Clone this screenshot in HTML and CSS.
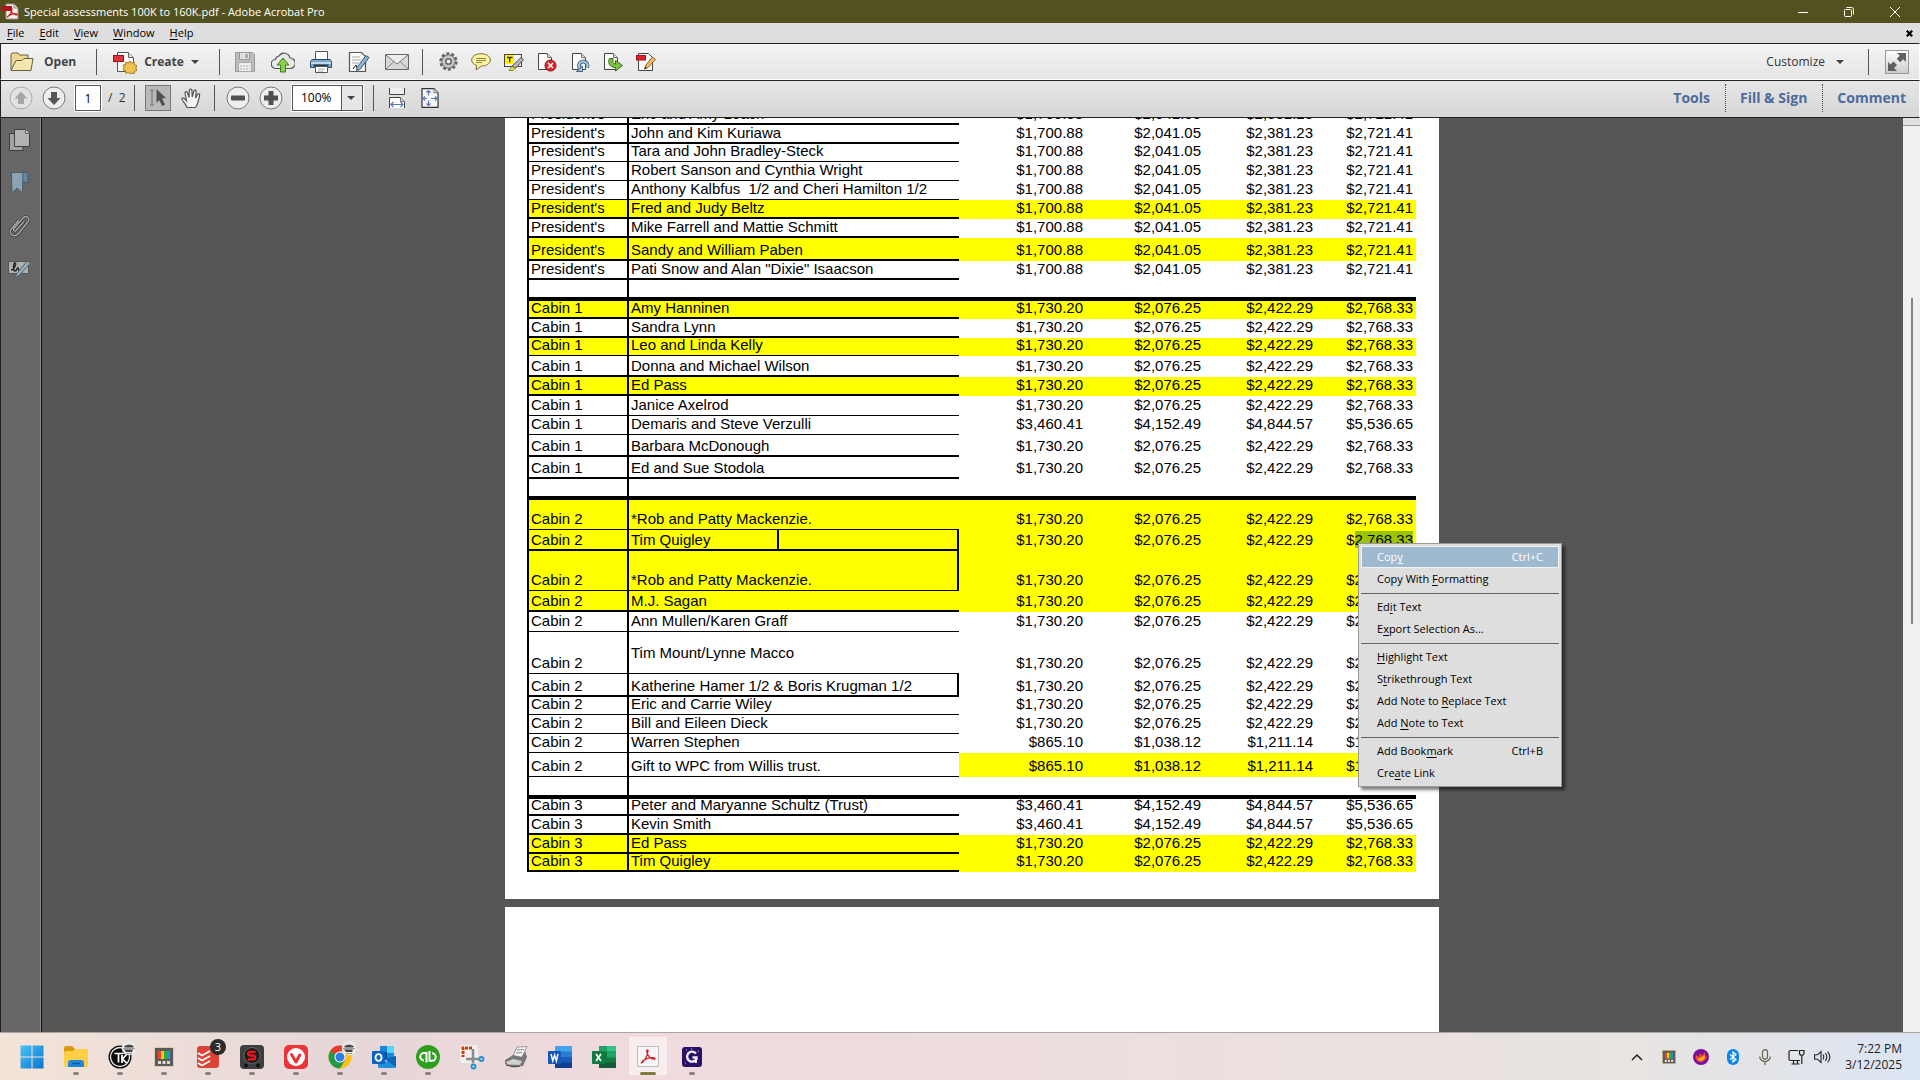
FILE: index.html
```html
<!DOCTYPE html>
<html lang="en">
<head>
    <meta charset="utf-8" />
    <title>Special assessments 100K to 160K.pdf - Adobe Acrobat Pro</title>
    <link rel="stylesheet" href="styles.css">
</head>

<body>
<header class="titlebar">
    <svg class="app_icon" width="17" height="17" viewBox="0 0 17 17"><path d="M4 1h8l4 4v11H4z" fill="#f4f0ec" stroke="#9a8f84"/><path d="M12 1v4h4" fill="#ccc" stroke="#9a8f84"/><path d="M0 3h10v5H0z" fill="#b3141c"/><path d="M5 14c2-1 5-5 5-8 0-1-1.500-1-1.200.500C9.300 9.500 12 12 14.500 12c1 0 1-1-.5-1.200C11 10.400 7 12 5.500 13.800z" fill="none" stroke="#c4121a" stroke-width="1.200"/></svg>
    <h1 class="tit">Special assessments 100K to 160K.pdf - Adobe Acrobat Pro</h1>
    <div class="win_btns">
        <button type="button" aria-label="Minimize"><svg width="10" height="10" viewBox="0 0 10 10"><path d="M0 5.500h10" stroke="#fff"/></svg></button>
        <button type="button" aria-label="Restore"><svg width="10" height="10" viewBox="0 0 10 10" fill="none" stroke="#fff"><rect x=".5" y="2.500" width="7" height="7" rx="1"/><path d="M2.500 .5h5a2 2 0 0 1 2 2v5"/></svg></button>
        <button type="button" aria-label="Close"><svg width="10" height="10" viewBox="0 0 10 10"><path d="M0 0l10 10M10 0L0 10" stroke="#fff"/></svg></button>
    </div>
</header>

<nav class="menubar">
    <a href="#"><u>F</u>ile</a>
    <a href="#"><u>E</u>dit</a>
    <a href="#"><u>V</u>iew</a>
    <a href="#"><u>W</u>indow</a>
    <a href="#"><u>H</u>elp</a>
    <button type="button" class="doc_close" aria-label="Close document"><svg width="7" height="7" viewBox="0 0 7 7"><path d="M.8 .8l5.400 5.400M6.200 .8L.8 6.200" stroke="#000" stroke-width="2.200"/></svg></button>
</nav>

<div class="toolbar">
    <button type="button" class="big open"><svg width="24" height="20" viewBox="0 0 24 20"><path d="M1 18V3l1-2h6l1.500 2H18v4" fill="#ecd793" stroke="#6b5f43"/><path d="M1 18.500L6 8.500h6l2-2h9l-2 12z" fill="#f5e6b0" stroke="#6b5f43"/></svg>Open</button>
    <span class="sep"></span>
    <button type="button" class="big create"><svg width="24" height="24" viewBox="0 0 24 24"><path d="M4.500 2.500h11l5 5v14h-16z" fill="#fbfbfb" stroke="#555"/><path d="M15.500 2.500v5h5" fill="#ddd" stroke="#666"/><rect x=".5" y="5.500" width="10" height="6" fill="#e0303a" stroke="#97141b"/><path d="M17 11l1.600 2 2.600-.8.3 2.600 2.500.8-1.200 2.400 1.200 2.400-2.500.8-.3 2.600-2.600-.8L17 24l-1.600-1.600-2.600.8-.3-2.600-2.500-.8 1.200-2.400L10 15l2.500-.2.300-2.600 2.600.8z" fill="#f0c24e" stroke="#a8791c"/></svg>Create<i class="caret"></i></button>
    <span class="sep"></span>
    <div class="group file_group">
        <button type="button" aria-label="Save"><svg width="20" height="20" viewBox="0 0 20 20"><path d="M.5 .5h17l2 2v17H.5z" fill="#bdbdbd" stroke="#999"/><rect x="4.500" y=".5" width="10" height="7" fill="#e0e0e0" stroke="#999"/><rect x="10" y="2" width="3" height="4" fill="#aaa"/><rect x="3.500" y="10.500" width="13" height="9" fill="#efefef" stroke="#aaa"/><path d="M5 14h10M5 17h10" stroke="#aaa" stroke-dasharray="2 1"/></svg></button>
        <button type="button" aria-label="Upload"><svg width="24" height="22" viewBox="0 0 24 22"><path d="M5 17.500a4.500 4.500 0 0 1-.5-9A4 4 0 0 1 8 5a6 6 0 0 1 11 2 5 5 0 0 1 0 10.500z" fill="#e9e9e9" stroke="#555" stroke-width="1.200"/><path d="M12 7l6 7h-3.500v7h-5v-7H6z" fill="#8ad14a" stroke="#3f7d17"/></svg></button>
        <button type="button" aria-label="Print"><svg width="22" height="24" viewBox="0 0 22 24"><path d="M5.500 1.500h12v10h-12z" fill="#fdfdfd" stroke="#555"/><path d="M2 9.500h18l1.500 2v6h-21v-6z" fill="#78a9cb" stroke="#2e4a60"/><path d="M1 13h20" stroke="#bcd8ea" stroke-width="2"/><path d="M3.500 15.500h15" stroke="#233645" stroke-width="2"/><path d="M5.500 16.500h12v6h-12z" fill="#fff" stroke="#555"/><path d="M8 19h7M8 21h5" stroke="#aaa"/></svg></button>
        <button type="button" aria-label="Sign"><svg width="22" height="22" viewBox="0 0 22 22"><path d="M1.500 1.500h12l4 4v15h-16z" fill="#fafafa" stroke="#555" stroke-width="1.200"/><path d="M4 6h8M4 9h9M4 12h7" stroke="#aaa"/><path d="M5 18l3-4 1 3 3-1" fill="none" stroke="#222"/><path d="M9 16.500L18 4.500l3 2-9 12-3.500 1z" fill="#8fb4d3" stroke="#3b5670"/></svg></button>
        <button type="button" aria-label="Email"><svg width="24" height="16" viewBox="0 0 24 16"><path d="M.5 .5h23v15H.5z" fill="#d8d8d8" stroke="#666"/><path d="M1 15l8.500-8M23 15l-8.500-8" stroke="#888"/><path d="M1 1l11 9L23 1" fill="#eee" stroke="#777"/></svg></button>
    </div>
    <span class="sep"></span>
    <div class="group edit_group">
        <button type="button" aria-label="Settings"><svg width="19" height="19" viewBox="0 0 19 19"><circle cx="9.500" cy="9.500" r="7.700" fill="none" stroke="#666" stroke-width="3" stroke-dasharray="3 1.840"/><circle cx="9.500" cy="9.500" r="6.700" fill="#bbb" stroke="#666"/><circle cx="9.500" cy="9.500" r="6" fill="#c4c4c4"/><circle cx="9.500" cy="9.500" r="2.700" fill="#eee" stroke="#555" stroke-width="1.300"/></svg></button>
        <button type="button" aria-label="Comment"><svg width="20" height="18" viewBox="0 0 20 18"><path d="M10 .7c5 0 9.300 2.500 9.300 6.300S15 13 10.500 13L5 17l.7-4.600C2.500 11.500.7 9.500.7 7 .7 3.200 5 .7 10 .7z" fill="#fbf3a0" stroke="#77713c"/><path d="M5 5.500h10M5 7.500h10M5 9.500h6" stroke="#8d8547"/></svg></button>
        <button type="button" aria-label="Highlight"><svg width="20" height="18" viewBox="0 0 20 18"><rect x=".5" y="1.500" width="17" height="12" fill="#f5f5f5" stroke="#444"/><rect x="1" y="2" width="9" height="9" fill="#fff100"/><path d="M3 4.500h5.500M5.700 4.500v5" stroke="#333" stroke-width="1.300"/><path d="M8 13l9-8.500 2.500 2L12 15z" fill="#b5b5b5" stroke="#555"/><path d="M5 17.500l3-4 3 1.500-2 2.500z" fill="#e7e04e" stroke="#8f8a2c"/></svg></button>
        <button type="button" aria-label="Delete page"><svg width="20" height="20" viewBox="0 0 20 20"><path d="M1.500 1.500h9l4 4v12h-13z" fill="#fafafa" stroke="#444"/><path d="M10.500 1.500v4h4" fill="#ddd" stroke="#777"/><circle cx="13.500" cy="13.500" r="5.500" fill="#d92b2f" stroke="#8d1216"/><path d="M11 11l5 5M16 11l-5 5" stroke="#fff" stroke-width="1.500"/></svg></button>
        <button type="button" aria-label="Rotate page"><svg width="20" height="20" viewBox="0 0 20 20"><path d="M2.500 1.500h9l4 4v12h-13z" fill="#fafafa" stroke="#444"/><path d="M11.500 1.500v4h4" fill="#ddd" stroke="#777"/><path d="M10.500 17A4.200 4.200 0 1 1 17 15.500" fill="none" stroke="#45627c" stroke-width="4"/><path d="M10.500 17A4.200 4.200 0 1 1 17 15.500" fill="none" stroke="#9fc3de" stroke-width="2.200"/><path d="M12.500 14v5.500h-6z" fill="#9fc3de" stroke="#45627c"/></svg></button>
        <button type="button" aria-label="Extract page"><svg width="20" height="20" viewBox="0 0 20 20"><path d="M1.500 1.500h9l4 4v12h-13z" fill="#fafafa" stroke="#444"/><path d="M10.500 1.500v4h4" fill="#ddd" stroke="#777"/><path d="M6.500 6.500c-2 4 0 9 6 9v3.500l7-5.500-7-5v3.500c-2.500 0-3-2-2.500-5.500z" fill="#7cc243" stroke="#356d12"/></svg></button>
        <button type="button" aria-label="Edit PDF"><svg width="20" height="20" viewBox="0 0 20 20"><path d="M2.500 1.500h10l4 4v13h-14z" fill="#fafafa" stroke="#444"/><rect x=".5" y="3.500" width="9" height="4.500" fill="#e0202a" stroke="#a0141b"/><path d="M8.500 17l1.500-4 6.500-8 3 2.500-7 7.500z" fill="#f2bb66" stroke="#8a6024"/><path d="M8.300 17.300l1-2.500 1.500 1.400z" fill="#222"/></svg></button>
    </div>
    <div class="right">
        <button type="button" class="customize">Customize<i class="caret"></i></button>
        <span class="sep"></span>
        <button type="button" class="fullscreen" aria-label="Full screen"><svg width="18" height="18" viewBox="0 0 18 18" fill="#606060"><path d="M9 0h9v9l-2.800-2.800-3 3-3.400-3.400 3-3zM0 9l2.500 2.500 3-3L9 12l-3 3 3 3H0z"/></svg></button>
    </div>
</div>

<div class="toolbar second">
    <button type="button" class="round off" aria-label="Previous page"><svg width="24" height="24" viewBox="0 0 24 24"><circle cx="12" cy="12" r="11" fill="#e2e2e2" stroke="#aaa"/><path d="M12 5.500l6.500 7H15V18H9v-5.500H5.500z" fill="#a5a5a5"/></svg></button>
    <button type="button" class="round" aria-label="Next page"><svg width="24" height="24" viewBox="0 0 24 24"><circle cx="12" cy="12" r="11" fill="#eee" stroke="#777"/><path d="M12 19l6.500-7H15V6H9v6H5.500z" fill="#555"/></svg></button>
    <input type="text" class="page_no" value="1" aria-label="Page number" />
    <span class="page_total">/&nbsp; 2</span>
    <span class="sep"></span>
    <button type="button" class="tool on" aria-label="Select tool"><svg width="20" height="20" viewBox="0 0 20 20"><path d="M2 2h4M2 17h4M4 2v15" stroke="#777" stroke-width="1.200" fill="none"/><path d="M8.500 1l9.500 9-4 .5 3 6-3 1.500-2.700-6L8.500 15z" fill="#505050"/></svg></button>
    <button type="button" class="tool" aria-label="Hand tool"><svg width="20" height="21" viewBox="0 0 20 21"><path d="M6 19.500c-1-3-3.500-5.500-5-8-.6-1.300 1.300-2 2.500-.8L5.500 13 4 5c-.2-1.700 1.900-2 2.400-.5L8 9.500 8.300 2.300c.1-1.600 2.500-1.600 2.600 0L11.200 9l1.600-6c.5-1.500 2.600-1.100 2.400.5L14.500 10l2-3.500c.8-1.300 2.500-.6 2.100 1C17.800 11 17 16 14.500 19.500z" fill="#f4f4f4" stroke="#555" stroke-width="1.200"/></svg></button>
    <span class="sep"></span>
    <button type="button" class="round" aria-label="Zoom out"><svg width="24" height="24" viewBox="0 0 24 24"><circle cx="12" cy="12" r="11" fill="#eee" stroke="#777"/><rect x="5" y="9.500" width="14" height="5" rx="1" fill="#505050"/></svg></button>
    <button type="button" class="round" aria-label="Zoom in"><svg width="24" height="24" viewBox="0 0 24 24"><circle cx="12" cy="12" r="11" fill="#eee" stroke="#777"/><path d="M9.500 5h5v4.500H19v5h-4.500V19h-5v-4.500H5v-5h4.500z" fill="#505050"/></svg></button>
    <span class="zoom_box">
        <select class="zoom" aria-label="Zoom"><option>100%</option></select>
        <i class="caret"></i>
    </span>
    <span class="sep"></span>
    <button type="button" class="fit" aria-label="Fit width"><svg width="18" height="20" viewBox="0 0 18 20"><path d="M1.500 0v6.500h15V0" fill="#eee" stroke="#444"/><path d="M1.500 20V9.500h11l4 4V20" fill="#fff" stroke="#444"/><path d="M12.500 9.500v4h4" fill="#ddd" stroke="#777"/><path d="M3 16.500h12M5.500 14L3 16.500 5.500 19M12.500 14l2.500 2.500-2.500 2.500" fill="none" stroke="#5a78b5" stroke-width="1.200"/></svg></button>
    <button type="button" class="fit" aria-label="Fit page"><svg width="18" height="20" viewBox="0 0 18 20"><path d="M1 .7h12l4 4v14.600H1z" fill="#f6f6f6" stroke="#333" stroke-width="1.200"/><path d="M13 .7v4h4" fill="#ddd" stroke="#777"/><path d="M7.500 2.500v5M7.500 12.500v5M2 10.500h4M10 10.500h6M5.500 4.500l2-2 2 2M5.500 15.500l2 2 2-2M4 8.500l-2 2 2 2M14 8.500l2 2-2 2" fill="none" stroke="#5a78b5" stroke-width="1.200"/></svg></button>
    <nav class="right panes">
        <a href="#">Tools</a>
        <a href="#">Fill &amp; Sign</a>
        <a href="#">Comment</a>
    </nav>
</div>

<main class="work">
    <aside class="side">
        <button type="button" aria-label="Page thumbnails"><svg width="22" height="24" viewBox="0 0 22 24"><path d="M.5 5.500H14v17H.5z" fill="#a3a3a3" stroke="#404040"/><path d="M5.500 1.500h11l4 4v13h-15z" fill="#b3b3b3" stroke="#404040"/><path d="M16.500 1.500v4h4" fill="#ccc" stroke="#666"/></svg></button>
        <button type="button" aria-label="Bookmarks"><svg width="18" height="24" viewBox="0 0 18 24"><path d="M9 1.500h8v10H9z" fill="#6387a0" stroke="#4a5b68"/><path d="M.5 1.500H12L11.500 22 6 17 1 22z" fill="#8ca3b3" stroke="#4a5b68"/></svg></button>
        <button type="button" aria-label="Attachments"><svg width="22" height="24" viewBox="0 0 22 24"><path d="M15 7.500L7 16.500c-1 1.500-3.500 0-2-2L14 4c2.500-3 8-.5 5 3.500l-9.500 12c-3.500 4.500-10.500 1-7.500-4L9.500 6.500" fill="none" stroke="#3f3f3f" stroke-width="3"/><path d="M15 7.500L7 16.500c-1 1.500-3.500 0-2-2L14 4c2.500-3 8-.5 5 3.500l-9.500 12c-3.500 4.500-10.500 1-7.500-4L9.500 6.500" fill="none" stroke="#a9a9a9" stroke-width="1.400"/></svg></button>
        <button type="button" aria-label="Signatures"><svg width="24" height="20" viewBox="0 0 24 20"><path d="M.5 2.500h20v12H.5z" fill="#b0b0b0" stroke="#555"/><path d="M3 11c3 0 6-7 4-7s-2 8 0 8 2-4 3-3 0 3 2 2" fill="none" stroke="#222" stroke-width="1.400"/><path d="M7 19l2-5L19 2.500l4 1L12 15.500z" fill="#97abb9" stroke="#55636e"/></svg></button>
    </aside>
    <section class="viewer">
        <article class="page first">
            <table class="fees">
                <colgroup><col class="c_house"><col class="c_name"><col class="c_1"><col class="c_2"><col class="c_3"><col class="c_4"></colgroup>
                <tbody>
                <tr class="h19"><td>President's</td><td>Eric and Amy Leach</td><td>$1,700.88</td><td>$2,041.05</td><td>$2,381.23</td><td>$2,721.41</td></tr>
                <tr class="h19"><td>President's</td><td>John and Kim Kuriawa</td><td>$1,700.88</td><td>$2,041.05</td><td>$2,381.23</td><td>$2,721.41</td></tr>
                <tr class="h18 thin"><td>President's</td><td>Tara and John Bradley-Steck</td><td>$1,700.88</td><td>$2,041.05</td><td>$2,381.23</td><td>$2,721.41</td></tr>
                <tr class="h19 thin"><td>President's</td><td>Robert Sanson and Cynthia Wright</td><td>$1,700.88</td><td>$2,041.05</td><td>$2,381.23</td><td>$2,721.41</td></tr>
                <tr class="h19 thin"><td>President's</td><td>Anthony Kalbfus&nbsp; 1/2 and Cheri Hamilton 1/2</td><td>$1,700.88</td><td>$2,041.05</td><td>$2,381.23</td><td>$2,721.41</td></tr>
                <tr class="h19 hl"><td>President's</td><td>Fred and Judy Beltz</td><td>$1,700.88</td><td>$2,041.05</td><td>$2,381.23</td><td>$2,721.41</td></tr>
                <tr class="h19"><td>President's</td><td>Mike Farrell and Mattie Schmitt</td><td>$1,700.88</td><td>$2,041.05</td><td>$2,381.23</td><td>$2,721.41</td></tr>
                <tr class="h23 hl"><td>President's</td><td>Sandy and William Paben</td><td>$1,700.88</td><td>$2,041.05</td><td>$2,381.23</td><td>$2,721.41</td></tr>
                <tr class="h19"><td>President's</td><td>Pati Snow and Alan "Dixie" Isaacson</td><td>$1,700.88</td><td>$2,041.05</td><td>$2,381.23</td><td>$2,721.41</td></tr>
                <tr class="h21 gap"><td></td><td></td><td></td><td></td><td></td><td></td></tr>
                <tr class="h18 hl"><td>Cabin 1</td><td>Amy Hanninen</td><td>$1,730.20</td><td>$2,076.25</td><td>$2,422.29</td><td>$2,768.33</td></tr>
                <tr class="h19"><td>Cabin 1</td><td>Sandra Lynn</td><td>$1,730.20</td><td>$2,076.25</td><td>$2,422.29</td><td>$2,768.33</td></tr>
                <tr class="h18 thin hl"><td>Cabin 1</td><td>Leo and Linda Kelly</td><td>$1,730.20</td><td>$2,076.25</td><td>$2,422.29</td><td>$2,768.33</td></tr>
                <tr class="h21"><td>Cabin 1</td><td>Donna and Michael Wilson</td><td>$1,730.20</td><td>$2,076.25</td><td>$2,422.29</td><td>$2,768.33</td></tr>
                <tr class="h19 hl"><td>Cabin 1</td><td>Ed Pass</td><td>$1,730.20</td><td>$2,076.25</td><td>$2,422.29</td><td>$2,768.33</td></tr>
                <tr class="h20 thin"><td>Cabin 1</td><td>Janice Axelrod</td><td>$1,730.20</td><td>$2,076.25</td><td>$2,422.29</td><td>$2,768.33</td></tr>
                <tr class="h19 thin"><td>Cabin 1</td><td>Demaris and Steve Verzulli</td><td>$3,460.41</td><td>$4,152.49</td><td>$4,844.57</td><td>$5,536.65</td></tr>
                <tr class="h22"><td>Cabin 1</td><td>Barbara McDonough</td><td>$1,730.20</td><td>$2,076.25</td><td>$2,422.29</td><td>$2,768.33</td></tr>
                <tr class="h22"><td>Cabin 1</td><td>Ed and Sue Stodola</td><td>$1,730.20</td><td>$2,076.25</td><td>$2,422.29</td><td>$2,768.33</td></tr>
                <tr class="h21 gap"><td></td><td></td><td></td><td></td><td></td><td></td></tr>
                <tr class="h30 thin hl"><td>Cabin 2</td><td>*Rob and Patty Mackenzie.</td><td>$1,730.20</td><td>$2,076.25</td><td>$2,422.29</td><td>$2,768.33</td></tr>
                <tr class="h21 hl"><td>Cabin 2</td><td class="boxed split">Tim Quigley</td><td>$1,730.20</td><td>$2,076.25</td><td>$2,422.29</td><td>$<span class="picked">2,768.33</span></td></tr>
                <tr class="h40 thin hl"><td>Cabin 2</td><td class="boxed">*Rob and Patty Mackenzie.</td><td>$1,730.20</td><td>$2,076.25</td><td>$2,422.29</td><td>$2,768.33</td></tr>
                <tr class="h21 hl"><td>Cabin 2</td><td>M.J. Sagan</td><td>$1,730.20</td><td>$2,076.25</td><td>$2,422.29</td><td>$2,768.33</td></tr>
                <tr class="h20 thin"><td>Cabin 2</td><td>Ann Mullen/Karen Graff</td><td>$1,730.20</td><td>$2,076.25</td><td>$2,422.29</td><td>$2,768.33</td></tr>
                <tr class="h42 thin"><td>Cabin 2</td><td class="middle">Tim Mount/Lynne Macco</td><td>$1,730.20</td><td>$2,076.25</td><td>$2,422.29</td><td>$2,768.33</td></tr>
                <tr class="h23"><td>Cabin 2</td><td class="boxed">Katherine Hamer 1/2 &amp; Boris Krugman 1/2</td><td>$1,730.20</td><td>$2,076.25</td><td>$2,422.29</td><td>$2,768.33</td></tr>
                <tr class="h18 thin"><td>Cabin 2</td><td>Eric and Carrie Wiley</td><td>$1,730.20</td><td>$2,076.25</td><td>$2,422.29</td><td>$2,768.33</td></tr>
                <tr class="h19 thin"><td>Cabin 2</td><td>Bill and Eileen Dieck</td><td>$1,730.20</td><td>$2,076.25</td><td>$2,422.29</td><td>$2,768.33</td></tr>
                <tr class="h19 thin"><td>Cabin 2</td><td>Warren Stephen</td><td>$865.10</td><td>$1,038.12</td><td>$1,211.14</td><td>$1,384.16</td></tr>
                <tr class="h24 thin hl_sum"><td>Cabin 2</td><td>Gift to WPC from Willis trust.</td><td>$865.10</td><td>$1,038.12</td><td>$1,211.14</td><td>$1,384.16</td></tr>
                <tr class="h22 gap"><td></td><td></td><td></td><td></td><td></td><td></td></tr>
                <tr class="h17"><td>Cabin 3</td><td>Peter and Maryanne Schultz (Trust)</td><td>$3,460.41</td><td>$4,152.49</td><td>$4,844.57</td><td>$5,536.65</td></tr>
                <tr class="h19"><td>Cabin 3</td><td>Kevin Smith</td><td>$3,460.41</td><td>$4,152.49</td><td>$4,844.57</td><td>$5,536.65</td></tr>
                <tr class="h19 hl"><td>Cabin 3</td><td>Ed Pass</td><td>$1,730.20</td><td>$2,076.25</td><td>$2,422.29</td><td>$2,768.33</td></tr>
                <tr class="h18 hl"><td>Cabin 3</td><td>Tim Quigley</td><td>$1,730.20</td><td>$2,076.25</td><td>$2,422.29</td><td>$2,768.33</td></tr>
                </tbody>
            </table>

            <div class="context" role="menu">
                <button type="button" class="current"><span>Cop<u>y</u></span><kbd>Ctrl+C</kbd></button>
                <button type="button"><span>Copy With <u>F</u>ormatting</span></button>
                <hr>
                <button type="button"><span>Ed<u>i</u>t Text</span></button>
                <button type="button"><span>E<u>x</u>port Selection As...</span></button>
                <hr>
                <button type="button"><span><u>H</u>ighlight Text</span></button>
                <button type="button"><span>S<u>t</u>rikethrough Text</span></button>
                <button type="button"><span>Add Note to <u>R</u>eplace Text</span></button>
                <button type="button"><span>Add <u>N</u>ote to Text</span></button>
                <hr>
                <button type="button"><span>Add Book<u>m</u>ark</span><kbd>Ctrl+B</kbd></button>
                <button type="button"><span>Cre<u>a</u>te Link</span></button>
            </div>
        </article>
        <article class="page next"></article>
    </section>
    <div class="scroll"><div class="scroll_top"></div><div class="thumb"></div></div>
</main>

<footer class="taskbar">
    <div class="apps">
        <button type="button" aria-label="Start"><svg width="24" height="24" viewBox="0 0 24 24"><linearGradient id="win" x1="0" y1="0" x2="1" y2="1"><stop offset="0" stop-color="#4cc4f5"/><stop offset="1" stop-color="#0873cf"/></linearGradient><path d="M.5 .5h11v11H.5zM12.500 .5h11v11h-11zM.5 12.500h11v11H.5zM12.500 12.500h11v11h-11z" fill="url(#win)"/></svg></button>
        <button type="button" class="run" aria-label="File Explorer"><svg width="24" height="24" viewBox="0 0 24 24"><path d="M0 3q0-2 2-2h6l3 3h11q2 0 2 2v5H0z" fill="#d99a12"/><path d="M0 8q0-2 2-2h7l2-2h11q2 0 2 2v14q0 2-2 2H2q-2 0-2-2z" fill="#fdcf44"/><path d="M4 22v-4q0-3 3-3h10q3 0 3 3v4z" fill="#1f86d8"/><path d="M8 18.500h8" stroke="#0d559c" stroke-width="1.400"/></svg></button>
        <button type="button" class="run" aria-label="TK"><svg width="32" height="32" viewBox="-4 0 32 32"><circle cx="12" cy="16" r="11.500" fill="#0b0b0b"/><circle cx="12" cy="16" r="9.500" fill="none" stroke="#e8e8e8" stroke-width="1.300"/><path d="M6.500 12.500h9M10.500 12.500v9M14 14v8M18.500 13.500L14.500 18l4 4" fill="none" stroke="#fff" stroke-width="1.700"/><circle cx="21" cy="7" r="7.300" fill="#e8e8e8"/><path d="M16 5.500c3-2.500 7-2.500 10 0l-1 1h-8zM16 8.500h9l-1 2.500h-6z" fill="#444"/><path d="M15 7.500h12M18 12.500h6" stroke="#999"/></svg></button>
        <button type="button" class="run" aria-label="PowerToys"><svg width="20" height="20" viewBox="0 0 20 20"><rect x=".5" y=".5" width="19" height="19" fill="#5a5a5a" stroke="#d6cdb0"/><path d="M4 4h3v8H4z" fill="#f0412c"/><path d="M7 4h3v8H7z" fill="#fdc712"/><path d="M10 4h3v8h-3z" fill="#34ad3d"/><path d="M13 4h3v8h-3z" fill="#1496e8"/><path d="M4 14h3v3H4zM8.500 14h3v3h-3zM13 14h3v3h-3z" fill="#e0dccd"/></svg></button>
        <button type="button" class="run" aria-label="Todoist"><svg width="22" height="22" viewBox="0 0 22 22"><rect width="22" height="22" rx="3" fill="#dc4437"/><path d="M1 7l4 2.500L13 5M1 12l4 2.500L13 10M1 17l4 2.500L13 15" fill="none" stroke="#fff" stroke-width="1.800"/></svg><span class="badge">3</span></button>
        <button type="button" class="run" aria-label="S"><svg width="24" height="24" viewBox="0 0 24 24"><rect width="24" height="24" rx="4" fill="#3c3e40"/><circle cx="12" cy="10.500" r="8" fill="#1b1b1c" stroke="#666"/><path d="M15.500 6.800H10.500c-3 0-3 3.700 0 3.700h2.500c3 0 3 3.900 0 3.900H8" fill="none" stroke="#f5121c" stroke-width="2.300"/><circle cx="6" cy="20.500" r="2" fill="#111"/><circle cx="18" cy="20.500" r="2" fill="#111"/></svg></button>
        <button type="button" class="run" aria-label="Vivaldi"><svg width="24" height="24" viewBox="0 0 24 24"><rect width="24" height="24" rx="5" fill="#ec3438"/><circle cx="12" cy="12" r="9" fill="#fff"/><path d="M7.500 9.500l4.500 7.500 3.800-7" fill="none" stroke="#ec3438" stroke-width="3" stroke-linecap="round" stroke-linejoin="round"/></svg></button>
        <button type="button" class="run" aria-label="Chrome"><svg width="32" height="32" viewBox="-4 0 32 32"><circle cx="12" cy="16" r="11.500" fill="#fbbf16"/><path d="M12 16L2 10.300A11.500 11.500 0 0 1 22 10.300h-10z" fill="#e23b2e"/><path d="M12 16L2 10.300A11.500 11.500 0 0 0 12 27.500l5-8.600z" fill="#23984a"/><circle cx="12" cy="16" r="5.500" fill="#fff"/><circle cx="12" cy="16" r="4.500" fill="#2f7de8"/><circle cx="21" cy="7" r="7.300" fill="#e8e8e8"/><path d="M16 5.500c3-2.500 7-2.500 10 0l-1 1h-8zM16 8.500h9l-1 2.500h-6z" fill="#444"/><path d="M15 7.500h12M18 12.500h6" stroke="#999"/></svg></button>
        <button type="button" class="run" aria-label="Outlook"><svg width="24" height="22" viewBox="0 0 24 22"><path d="M8 0h14v13H8z" fill="#1b87d6"/><path d="M15 0h7v7h-7z" fill="#50d9ff"/><path d="M8 6h7v7H8z" fill="#0a4d93"/><path d="M6 21V11l9 5 9-6v11q0 1-1 1H7z" fill="#1e90dd"/><path d="M24 10v11l-12-8z" fill="#1166b4"/><rect y="5" width="13" height="13" rx="1" fill="#0c64bd"/><ellipse cx="6.500" cy="11.500" rx="3" ry="3.300" fill="none" stroke="#fff" stroke-width="1.800"/></svg></button>
        <button type="button" class="run" aria-label="QuickBooks"><svg width="24" height="24" viewBox="0 0 24 24"><circle cx="12" cy="12" r="12" fill="#2ca01c"/><path d="M10.500 17.500V8H8a3.700 3.700 0 0 0 0 7.500M13.500 6v9.800H16a3.700 3.700 0 0 0 0-7.500" fill="none" stroke="#fff" stroke-width="2"/></svg></button>
        <button type="button" aria-label="Snipping Tool"><svg width="26" height="26" viewBox="0 0 26 26"><rect x="1" y="1" width="18" height="18" rx="2" fill="#f0f0f0"/><path d="M13 4H4v9" fill="none" stroke="#d83b01" stroke-width="3" stroke-dasharray="3 1"/><path d="M14 5v14M7 15h13" stroke="#8c8c8c" stroke-width="2.600"/><circle cx="22.500" cy="15" r="2" fill="none" stroke="#1b93d8" stroke-width="1.800"/><circle cx="14.500" cy="22.500" r="2" fill="none" stroke="#1b93d8" stroke-width="1.800"/></svg></button>
        <button type="button" aria-label="Scanner"><svg width="24" height="22" viewBox="0 0 24 22"><path d="M9 10l4-9 10-.5-5 11z" fill="#f3f3f3" stroke="#999"/><path d="M13 4l7-.5M12 7l6-.5" stroke="#888"/><path d="M1 14l8-5 9 2 3-6 2 6-4 9-10 1-8-3z" fill="#777"/><path d="M2 16l7-3 9 2-2 4-12-.5z" fill="#d0d0d0"/><path d="M2 19l8 2 6-1" stroke="#444" fill="none"/></svg></button>
        <button type="button" aria-label="Word"><svg width="24" height="22" viewBox="0 0 24 22"><path d="M7 0h17v6H7z" fill="#41a5ee"/><path d="M7 5.500h17v6H7z" fill="#2b7cd3"/><path d="M7 11h17v6H7z" fill="#185abd"/><path d="M7 16.500h17V22H7z" fill="#103f91"/><rect y="5" width="13" height="13" rx="1" fill="#1a56b8"/><path d="M3 8l1.800 7 1.800-6 1.800 6L10 8" fill="none" stroke="#fff" stroke-width="1.400"/></svg></button>
        <button type="button" aria-label="Excel"><svg width="24" height="22" viewBox="0 0 24 22"><path d="M7 0h17v6H7z" fill="#21a366"/><path d="M15 0h9v6h-9z" fill="#33c481"/><path d="M7 5.500h17V17H7z" fill="#107c41"/><path d="M15 5.500h9v6h-9z" fill="#21a366"/><path d="M7 16.500h17V22H7z" fill="#185c37"/><rect y="5" width="13" height="13" rx="1" fill="#107c41"/><path d="M4 8l5 7M9 8l-5 7" fill="none" stroke="#fff" stroke-width="1.700"/></svg></button>
        <button type="button" class="run active" aria-label="Adobe Acrobat"><svg width="22" height="22" viewBox="0 0 22 22"><rect x=".5" y=".5" width="21" height="20" fill="#f7f7f7" stroke="#bbb"/><path d="M4.500 17c2.500-1 6-7 6.500-12 0-2-2-1-1.200 1C11 10 14 13 17 13.300c1.500 0 1.500-1.300-.5-1.600C12 11.200 6 13.500 4.500 16.500z" fill="none" stroke="#d8232a" stroke-width="1.300"/></svg></button>
        <button type="button" class="run" aria-label="G"><svg width="20" height="20" viewBox="0 0 20 20"><rect width="20" height="20" rx="3" fill="#2b1166"/><path d="M14 6.500A5 5 0 1 0 14.500 12V10.500h-4" fill="none" stroke="#f0ecfb" stroke-width="2.400"/><path d="M14 12v4" stroke="#f0ecfb" stroke-width="2"/><path d="M4 3h1M16 4h1M3 16h1M9 2h1" stroke="#cbb8ff"/></svg></button>
    </div>
    <div class="tray">
        <button type="button" aria-label="Show hidden icons"><svg width="12" height="8" viewBox="0 0 12 8"><path d="M1 7l5-5 5 5" fill="none" stroke="#222" stroke-width="1.500"/></svg></button>
        <button type="button" aria-label="PowerToys"><svg width="14" height="14" viewBox="0 0 20 20"><rect x=".5" y=".5" width="19" height="19" fill="#5a5a5a" stroke="#c9bd8e"/><path d="M4 4h3v8H4z" fill="#f0412c"/><path d="M7 4h3v8H7z" fill="#fdc712"/><path d="M10 4h3v8h-3z" fill="#34ad3d"/><path d="M13 4h3v8h-3z" fill="#1496e8"/><path d="M4 14h3v3H4zM8.500 14h3v3h-3zM13 14h3v3h-3z" fill="#e0dccd"/></svg></button>
        <button type="button" aria-label="Flame"><svg width="16" height="16" viewBox="0 0 16 16"><circle cx="8" cy="8" r="8" fill="#7d0fa0"/><path d="M3 6l3 2 1-4 2 3 3-4v5l2-1c-1 4-4 6-7 6-3-.5-5-3-4-7z" fill="#f5521d"/><path d="M5 10l3-1 4-3c0 4-2 5.500-4 5.500S5.300 11 5 10z" fill="#ffb42c"/></svg></button>
        <button type="button" aria-label="Bluetooth"><svg width="12" height="16" viewBox="0 0 12 16"><rect width="12" height="16" rx="6" fill="#0a84f0"/><path d="M3 5.500l6 5-3 2.500V3l3 2.500-6 5" fill="none" stroke="#fff" stroke-width="1.200"/></svg></button>
        <button type="button" aria-label="Microphone"><svg width="12" height="16" viewBox="0 0 12 16" fill="none" stroke="#666048" stroke-width="1.200"><rect x="3.500" y=".6" width="5" height="9.500" rx="2.500"/><path d="M.7 7.500a5.300 5 0 0 0 10.600 0M6 12.500V16"/></svg></button>
        <button type="button" class="net" aria-label="Network"><svg width="17" height="16" viewBox="0 0 17 16" fill="none" stroke="#222" stroke-width="1.200"><path d="M10 1.500H2.500a1.500 1.500 0 0 0-1.500 1.500v7a1.500 1.500 0 0 0 1.500 1.500h9.500M5.500 11.500v3M3.500 15h8M9.500 11.500v3"/><path d="M11.500 1.500h4.500V4a2 2 0 0 1-4.500 0zM13.800 6.500V15"/></svg></button>
        <button type="button" class="vol" aria-label="Volume"><svg width="17" height="14" viewBox="0 0 17 14" fill="none" stroke="#222" stroke-width="1.100"><path d="M.6 4.800h2.900L7 1.500v11L3.500 9.200H.6z"/><path d="M9 4.500q1.500 2.500 0 5M11.300 3q3 4 0 8M13.600 1.500q4.500 5.500 0 11"/></svg></button>
        <div class="clock"><span>7:22 PM</span><span>3/12/2025</span></div>
    </div>
</footer>
</body>
</html>
```
FILE: styles.css
```css
* {box-sizing:border-box;}
body {display:flex;flex-direction:column;height:100vh;margin:0;overflow:hidden;font:normal 12px/16px "Open Sans", "Noto Sans", Arial, sans-serif;color:#000;background-color:#555;}
button {display:flex;align-items:center;justify-content:center;margin:0;padding:0;border:0 none;background:none;font:inherit;color:inherit;}
a {color:inherit;text-decoration:none;}
svg {display:block;flex:none;}
u {text-underline-offset:2px;}

/* title + menu */
.titlebar {display:flex;align-items:center;flex:none;height:23px;padding-left:2px;background-color:#545120;color:#fff;}
.tit {flex:1;margin:0 0 0 5px;font-size:11px;font-weight:normal;}
.win_btns {display:flex;height:20px;margin-right:2px;}
.win_btns button {width:46px;}
.menubar {display:flex;align-items:center;flex:none;gap:15px;height:20px;padding:0 7px;background-color:#dedede;font-size:11px;}
.doc_close {margin-left:auto;}

/* toolbars */
.toolbar {display:flex;align-items:center;flex:none;height:37px;padding:0 10px 0 9px;border:1px solid #fff;border-top:1px solid #222;border-left:1px solid #222;background:linear-gradient(#f4f4f4, #e5e5e5);color:#333;}
.second {height:38px;padding:0 10px 2px 8px;border-bottom:1px solid #222;background:linear-gradient(#e6e6e6, #d6d6d6);}
.sep {flex:none;width:1px;height:26px;background-color:#555;}
.caret {border:4px solid transparent;border-top-color:#444;border-bottom:0 none;}
.big {gap:10px;font-weight:bold;color:#444;}
.open {margin-right:20px;}
.create {gap:7px;margin:0 20px 0 16px;}
.group {display:flex;}
.file_group {margin:0 6px;}
.file_group button {width:38px;}
.edit_group {margin-left:9px;}
.edit_group button {width:33px;}
.right {display:flex;align-items:center;margin-left:auto;}
.customize {gap:11px;margin-right:24px;}
.fullscreen {width:24px;height:24px;margin-left:16px;border:1px solid #999;background:linear-gradient(#fff, #ccc);}
.round {margin-right:9px;}
.page_no {width:26px;height:26px;padding:0;border:1px solid #555;outline:1px solid #fff;background-color:#fff;font:inherit;text-align:center;}
.page_total {width:33px;padding-left:7px;}
.tool {width:26px;height:26px;margin-left:10px;}
.tool + .tool {margin:0 10px 0 7px;}
.on {border:1px solid #777;background-color:#b9b9b9;}
.tool + .sep {margin-right:11px;}
.zoom_box {position:relative;display:flex;align-items:center;width:71px;height:26px;margin-right:10px;border:1px solid #555;outline:1px solid #fff;background:linear-gradient(#fff, #fff) 0 0 / 48px 100% no-repeat, #e6e6e6;}
.zoom {width:100%;height:100%;padding:0 0 0 8px;border:0 none;background:none;appearance:none;font:inherit;color:#000;}
.zoom_box .caret {position:absolute;right:7px;}
.zoom_box:after {content:"";position:absolute;left:48px;top:0;width:1px;height:100%;background-color:#555;}
.fit {width:33px;}
.zoom_box + .sep {margin-right:6px;}
.panes {font-weight:bold;font-size:14px;color:#4c6c9c;}
.panes a {padding:4px 15px 4px 14px;border-left:1px dotted #444;line-height:20px;}
.panes a:first-child {border:0 none;}
.panes a:last-child {padding-right:3px;}

/* work area */
.work {display:flex;flex:1;min-height:0;border-left:1px solid #222;}
.side {display:flex;flex-direction:column;align-items:center;flex:none;width:41px;padding-right:3px;border-right:1px solid #111;background-color:#666;box-shadow:inset -1px 0 #888;}
.side button {height:43px;}
.viewer {flex:1;min-width:0;padding-right:1px;overflow:hidden;background-color:#555;}
.page {position:relative;width:934px;margin:0 auto;background-color:#fff;}
.first {margin-top:-12px;padding:0 23px 27px 22px;}
.next {height:400px;margin-top:8px;}
.scroll {flex:none;width:17px;background-color:#f0f0f0;}
.scroll_top {height:8px;border-bottom:1px solid #999;background-color:#e1e1e1;}
.thumb {width:2px;height:326px;margin:172px auto 0;background-color:#858585;}

/* assessment table */
.fees {width:100%;table-layout:fixed;border-spacing:0;border-left:2px solid #000;font:normal 15px/12px "Liberation Sans", Arial, sans-serif;white-space:nowrap;}
.c_house {width:100px;}
.c_name {width:330px;}
.c_1 {width:126px;}
.c_2 {width:118px;}
.c_3 {width:112px;}
.fees td {padding:0 2px 3px;border-bottom:2px solid transparent;vertical-align:bottom;text-align:right;}
.fees td:nth-child(-n+2) {border-bottom-color:#000;text-align:left;}
.fees td:first-child {border-right:2px solid #000;}
.fees td:last-child {padding-right:3px;}
.fees .thin td {padding-bottom:4px;border-bottom-width:1px;}
.fees .gap td {padding:0;border-bottom:4px solid #000;}
.fees .hl td {background-color:#ff0;}
.hl_sum td:nth-child(n+3) {background-color:#ff0;}
.fees .boxed {border-right:2px solid #000;}
.fees .hl .split {background-image:linear-gradient(#000, #000);background-size:2px 100%;background-position:148px 0;background-repeat:no-repeat;}
.fees .thin .middle {padding-bottom:14px;}
.picked {background-color:#9bc400;}
.h17 {height:17px;}
.h18 {height:18px;}
.h19 {height:19px;}
.h20 {height:20px;}
.h21 {height:21px;}
.h22 {height:22px;}
.h23 {height:23px;}
.h24 {height:24px;}
.h30 {height:30px;}
.h40 {height:40px;}
.h42 {height:42px;}

/* right-click menu */
.context {position:absolute;left:853px;top:437px;z-index:2;width:204px;padding:2px;border:1px solid #999;background-color:#dedede;font-size:11px;box-shadow:3px 3px 3px rgba(0,0,0,.5);}
.context button {justify-content:space-between;width:100%;height:22px;padding:0 15px;border:1px solid transparent;}
.context .current {border-color:#eef3f7;background-color:#9fb9cf;color:#fff;}
.context kbd {font:inherit;}
.context hr {height:1px;margin:3px 0 2px;border:0 none;background-color:#666;}

/* taskbar */
.taskbar {display:flex;justify-content:space-between;flex:none;height:48px;padding:0 18px 0 10px;border-top:1px solid #aaa5a5;background:linear-gradient(90deg, #f3e4d9, #e6d6d8 18%, #f0dadd 33%, #ecdfdd 60%, #e8e4e1 84%, #e2e4e9 93%, #dbe5f4);}
.apps {display:flex;}
.apps button {position:relative;width:44px;height:47px;}
.run:after {content:"";position:absolute;left:19px;bottom:5px;width:6px;height:3px;border-radius:2px;background-color:#8a8282;}
.active {background:linear-gradient(#f8eef0, #f8eef0) 3px 4px / 38px 38px no-repeat;}
.active:after {left:14px;width:16px;background-color:#827c3c;}
.badge {position:absolute;left:24px;top:6px;width:16px;height:16px;border-radius:8px;background-color:#2b2b2b;color:#fff;font-size:11px;line-height:16px;}
.tray {display:flex;align-items:center;}
.tray button {width:32px;height:100%;}
.tray .net {width:30px;}
.tray .vol {width:22px;}
.clock {display:flex;flex-direction:column;width:69px;text-align:right;color:#222;}
```
